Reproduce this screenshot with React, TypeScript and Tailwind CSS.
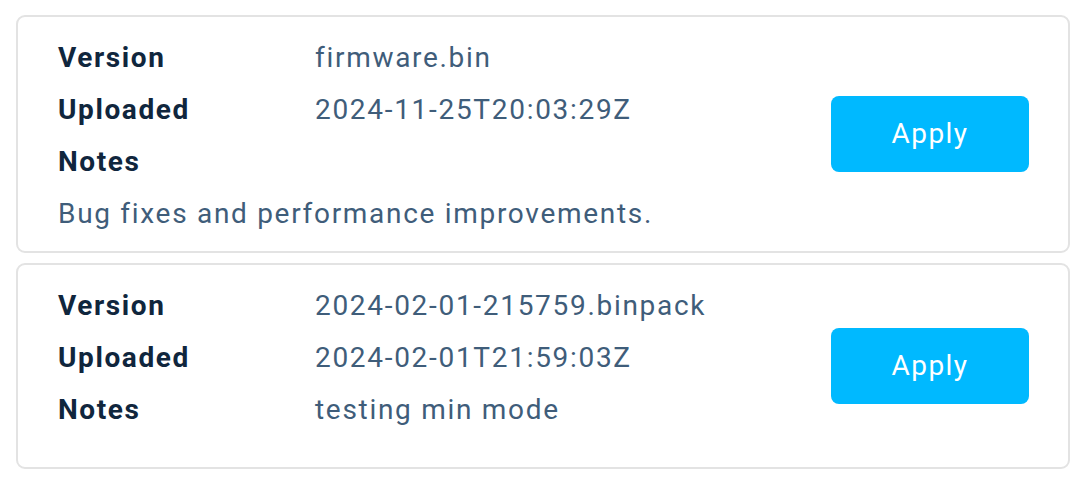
import React from "react";

type Item = { version: string; uploaded: string; notes: string; notesBelow: boolean };

const items: Item[] = [
  { version: "firmware.bin", uploaded: "2024-11-25T20:03:29Z", notes: "Bug fixes and performance improvements.", notesBelow: true },
  { version: "2024-02-01-215759.binpack", uploaded: "2024-02-01T21:59:03Z", notes: "testing min mode", notesBelow: false },
];

function Row({ label, value }: { label: string; value?: string }) {
  return (
    <div className="flex h-[52px] items-center">
      <div className="w-[257px] shrink-0 font-bold tracking-[1.6px] text-[#10263d]">{label}</div>
      {value !== undefined && <div className="text-[#3f5d7a]">{value}</div>}
    </div>
  );
}

function Card({ item }: { item: Item }) {
  return (
    <div
      className={`flex items-center rounded-[9px] border-2 border-[#e3e3e3] bg-white pl-[40px] pr-[39px] ${
        item.notesBelow ? "h-[238px]" : "h-[206px]"
      }`}
    >
      <div className={`flex-1 self-start ${item.notesBelow ? "pt-[15px]" : "pt-[15px]"}`}>
        <Row label="Version" value={item.version} />
        <Row label="Uploaded" value={item.uploaded} />
        {item.notesBelow ? (
          <>
            <Row label="Notes" />
            <div className="flex h-[52px] items-center text-[#3f5d7a]">{item.notes}</div>
          </>
        ) : (
          <Row label="Notes" value={item.notes} />
        )}
      </div>
      <button className="h-[76px] w-[198px] rounded-[8px] bg-[#00b9ff] tracking-[1.4px] text-white">Apply</button>
    </div>
  );
}

export default function App() {
  return (
    <div
      className="flex h-[484px] w-[1092px] flex-col gap-[10px] bg-white pl-[16px] pr-[22px] pt-[15px] text-[28px] tracking-[1.7px]"
      style={{ fontFamily: "Roboto, 'Noto Sans', sans-serif" }}
    >
      {items.map((it, i) => (
        <Card key={i} item={it} />
      ))}
    </div>
  );
}
